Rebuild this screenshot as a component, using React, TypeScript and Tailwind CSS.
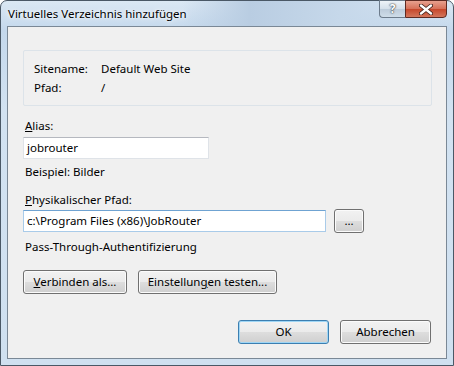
import React from 'react';

const font = { fontFamily: '"Noto Sans", "Liberation Sans", sans-serif' };

// Vista style push button
const Btn = ({ children, w, primary = false }: { children: React.ReactNode; w: string; primary?: boolean }) => (
  <button
    className={`${w} h-[24px] rounded-[3px] border text-[11.5px] text-black leading-none ${
      primary
        ? 'border-[#3c7fb1] shadow-[inset_0_0_0_1px_#9fd6f5]'
        : 'border-[#707070] shadow-[inset_0_0_0_1px_#fbfbfb]'
    } bg-[linear-gradient(#f2f2f2_0%,#ebebeb_48%,#dddddd_52%,#cfcfcf_100%)]`}
  >
    {children}
  </button>
);

const Field = ({ value, w, focus = false }: { value: string; w: string; focus?: boolean }) => (
  <div
    className={`${w} h-[22px] bg-white border flex items-center px-[3px] text-[11.5px] text-black ${
      focus
        ? 'border-[#a9cbe9] border-t-[#6fa3d2]'
        : 'border-[#dfe3e8] border-t-[#b5b8bf]'
    }`}
  >
    {value}
  </div>
);

export default function App() {
  return (
    <div className="w-[454px] h-[366px] bg-white" style={font}>
      <div className="w-[454px] h-[366px] rounded-t-[7px] border border-[#4a5866] bg-[linear-gradient(180deg,#dbe8f4_0%,#c4d8ec_8%,#d2e2f1_30%,#cfe0f0_100%)] flex flex-col">
        {/* title bar */}
        <div className="h-[25px] flex items-start relative bg-[linear-gradient(90deg,transparent_0%,transparent_40%,#b9cde2_55%,#c6d8ea_75%,transparent_100%)]">
          <span className="text-[11.5px] text-black ml-[7px] mt-[5px] leading-[16px] [text-shadow:0_0_6px_#ffffff,0_0_3px_#ffffff]">
            Virtuelles Verzeichnis hinzufügen
          </span>
          <div className="absolute right-[6px] top-[-1px] flex">
            <div className="w-[26px] h-[18px] rounded-bl-[4px] border border-[#6d7c8c] border-r-0 bg-[linear-gradient(#eef3f8_0%,#d4dfea_50%,#bccbda_51%,#cfdde9_100%)] flex items-center justify-center text-[12px] font-bold text-white [text-shadow:0_0_1px_#333,0_0_2px_#333]">
              ?
            </div>
            <div className="w-[42px] h-[18px] rounded-br-[4px] border border-[#5e2a22] bg-[linear-gradient(#e8a18f_0%,#d66f57_50%,#c6472b_51%,#d3765c_100%)] flex items-center justify-center">
              <svg width="14" height="11" viewBox="0 0 14 11">
                <path d="M2 1.5 L12 9.5 M12 1.5 L2 9.5" stroke="#3b1d16" strokeWidth="4" strokeLinecap="round" />
                <path d="M2 1.5 L12 9.5 M12 1.5 L2 9.5" stroke="#ffffff" strokeWidth="2.4" strokeLinecap="round" />
              </svg>
            </div>
          </div>
        </div>

        {/* client area */}
        <div className="mx-[6px] mb-[6px] flex-1 border border-[#7a8896] bg-[#f0f0f0] flex flex-col pl-[15px] pr-[14px] pt-[23px] text-[11.5px] text-black">
          <div className="h-[56px] border border-[#dce3e9] rounded-[2px] pl-[10px] pt-[8px]">
            <div className="flex leading-[19px]">
              <span className="w-[67px]">Sitename:</span>
              <span>Default Web Site</span>
            </div>
            <div className="flex leading-[19px]">
              <span className="w-[67px]">Pfad:</span>
              <span>/</span>
            </div>
          </div>

          <div className="mt-[12px] leading-[16px] pl-[2px]">
            <span className="underline">A</span>lias:
          </div>
          <div className="mt-[3px]">
            <Field value="jobrouter" w="w-[186px]" />
          </div>
          <div className="mt-[5px] leading-[16px] pl-[2px]">Beispiel: Bilder</div>

          <div className="mt-[12px] leading-[16px] pl-[2px]">
            <span className="underline">P</span>hysikalischer Pfad:
          </div>
          <div className="mt-[1px] flex items-center gap-[8px]">
            <Field value="c:\Program Files (x86)\JobRouter" w="w-[303px]" focus />
            <Btn w="w-[30px]">...</Btn>
          </div>
          <div className="mt-[6px] leading-[16px] pl-[2px]">Pass-Through-Authentifizierung</div>

          <div className="mt-[15px] flex gap-[11px]">
            <Btn w="w-[104px]">
              <span className="underline">V</span>erbinden als...
            </Btn>
            <Btn w="w-[139px]">
              Einstellun<span className="underline">g</span>en testen...
            </Btn>
          </div>

          <div className="mt-[26px] flex justify-end gap-[11px] pr-[1px]">
            <Btn w="w-[91px]" primary>OK</Btn>
            <Btn w="w-[91px]">Abbrechen</Btn>
          </div>
        </div>
      </div>
    </div>
  );
}
